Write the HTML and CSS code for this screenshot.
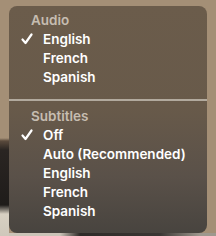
FILE: index.html
```html
<!DOCTYPE html>
<html lang="en">
<head>
    <meta charset="UTF-8">
    <title>Audio and Subtitles</title>
    <link rel="stylesheet" href="styles.css">
</head>
<body>
    <div class="menu">
        <div class="section">
            <div class="heading">Audio</div>
            <div class="item checked">
                <svg class="check" width="12" height="12" viewBox="0 0 12 12"><path d="M1.5 6.5 L4.5 10 L10.5 1.5" fill="none" stroke="#fff" stroke-width="2.2" stroke-linecap="round" stroke-linejoin="round"/></svg>
                English
            </div>
            <div class="item">French</div>
            <div class="item">Spanish</div>
        </div>
        <div class="separator"></div>
        <div class="section">
            <div class="heading">Subtitles</div>
            <div class="item checked">
                <svg class="check" width="12" height="12" viewBox="0 0 12 12"><path d="M1.5 6.5 L4.5 10 L10.5 1.5" fill="none" stroke="#fff" stroke-width="2.2" stroke-linecap="round" stroke-linejoin="round"/></svg>
                Off
            </div>
            <div class="item">Auto (Recommended)</div>
            <div class="item">English</div>
            <div class="item">French</div>
            <div class="item">Spanish</div>
        </div>
    </div>
</body>
</html>
```

FILE: styles.css
```css
* {
    margin: 0;
    padding: 0;
    box-sizing: border-box;
}

body {
    width: 216px;
    height: 236px;
    padding: 6px 9px 3px 9px;
    font-family: 'Inter', 'Liberation Sans', sans-serif;
    font-weight: 600;
    font-size: 13.5px;
    background:
        linear-gradient(180deg, transparent 0, transparent 138px, #5a4a3c 141px, #2a2522 150px, #1f1c1a 205px, #d8d0c2 214px, #cfc8bb 236px) left / 9px 100% no-repeat,
        linear-gradient(90deg, #cbc4b8 0, #cbc4b8 60px, #2e2b28 80px, #3a3734 160px, #9e988e 200px) bottom / 100% 3px no-repeat,
        #a48f76;
    overflow: hidden;
}

.menu {
    height: 227px;
    border-radius: 8px;
    background: linear-gradient(180deg, #6b5c4b 0, #685a4a 45%, #5a5149 75%, #48443f 100%);
    overflow: hidden;
}

.section {
    padding: 5px 0 12px;
}

.section + .separator + .section {
    padding-top: 6px;
}

.heading,
.item {
    height: 19px;
    line-height: 19px;
    white-space: nowrap;
}

.heading {
    padding-left: 22px;
    color: #c6bdb1;
}

.item {
    position: relative;
    padding-left: 34px;
    color: #fff;
}

.check {
    position: absolute;
    left: 12px;
    top: 3px;
}

.separator {
    height: 2px;
    background: #b2aa9e;
}
```
